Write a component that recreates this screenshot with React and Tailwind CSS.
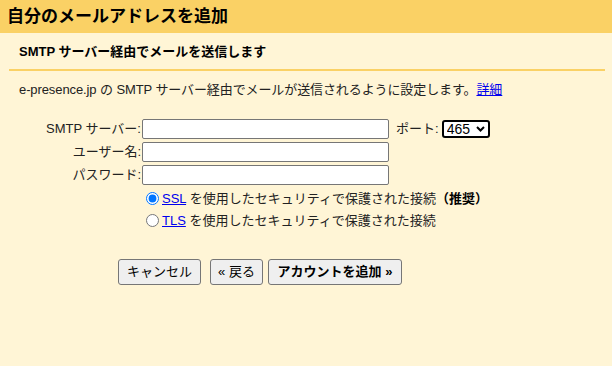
import React, { useState } from 'react';

const font = "font-['Liberation_Sans','Noto_Sans_CJK_JP',sans-serif]";

const Field = ({ label, children }) => (
  <div className="flex items-center h-[20px]">
    <label className="w-[142px] pr-[1px] text-right leading-[20px] text-[#222]">{label}</label>
    {children}
  </div>
);

const TextInput = ({ type = 'text' }) => (
  <input
    type={type}
    className="w-[247px] h-[20px] bg-white border border-[#767676] rounded-[2px] px-[2px] text-[13px] outline-none"
  />
);

const Button = ({ children, w, bold }) => (
  <button
    className={`h-[26px] ${w} bg-[#efefef] border border-[#767676] rounded-[3px] text-[13px] text-black ${bold ? 'font-bold' : ''}`}
  >
    {children}
  </button>
);

const App = () => {
  const [secure, setSecure] = useState('ssl');

  return (
    <div className={`w-[612px] h-[366px] bg-[#fff5d6] text-[13px] text-[#222] ${font}`}>
      <div className="h-[33px] bg-[#fad165] px-[7px] flex items-center">
        <h1 className="text-[17px] font-bold text-black leading-none">自分のメールアドレスを追加</h1>
      </div>

      <div className="pl-[19px] h-[36px] flex items-center">
        <h2 className="font-bold text-black leading-none">SMTP サーバー経由でメールを送信します</h2>
      </div>
      <div className="ml-[9px] mr-[7px] h-[2px] bg-[#fad165]" />

      <p className="pl-[19px] h-[37px] flex items-center leading-none tracking-[-0.1px]">
        e-presence.jp の SMTP サーバー経由でメールが送信されるように設定します。
        <a href="#" className="text-[#0000ee] underline">詳細</a>
      </p>

      <div className="pt-[11px] flex flex-col gap-[3px]">
        <div className="flex items-center">
          <Field label="SMTP サーバー:">
            <TextInput />
          </Field>
          <span className="ml-[7px] text-[#222]">ポート:</span>
          <div className="relative ml-[3px]">
            <select className="appearance-none block h-[18px] w-[48px] py-0 pl-[3px] pr-[14px] border-2 border-black rounded-[3px] bg-white text-[14px] leading-[14px] text-black outline-none">
              <option>465</option>
              <option>587</option>
            </select>
            {/* chevron */}
            <svg className="absolute right-[5px] top-[6px] pointer-events-none" width="9" height="6" viewBox="0 0 9 6">
              <path d="M1 1 L4.5 4.5 L8 1" fill="none" stroke="black" strokeWidth="2" />
            </svg>
          </div>
        </div>
        <Field label="ユーザー名:">
          <TextInput />
        </Field>
        <Field label="パスワード:">
          <TextInput type="password" />
        </Field>
      </div>

      <div className="pl-[146px] pt-[7px] flex flex-col gap-[9px]">
        <label className="flex items-center h-[13px] gap-[3px]">
          <input
            type="radio"
            name="sec"
            checked={secure === 'ssl'}
            onChange={() => setSecure('ssl')}
            className="w-[13px] h-[13px] m-0 accent-[#0075ff]"
          />
          <span className="leading-none">
            <a href="#" className="text-[#0000ee] underline">SSL</a> を使用したセキュリティで保護された接続
            <b className="text-black">（推奨）</b>
          </span>
        </label>
        <label className="flex items-center h-[13px] gap-[3px]">
          <input
            type="radio"
            name="sec"
            checked={secure === 'tls'}
            onChange={() => setSecure('tls')}
            className="w-[13px] h-[13px] m-0 accent-[#0075ff]"
          />
          <span className="leading-none">
            <a href="#" className="text-[#0000ee] underline">TLS</a> を使用したセキュリティで保護された接続
          </span>
        </label>
      </div>

      <div className="pl-[118px] pt-[32px] flex">
        <Button w="w-[83px]">キャンセル</Button>
        <div className="ml-[9px]"><Button w="w-[53px]">« 戻る</Button></div>
        <div className="ml-[5px]"><Button w="w-[134px]" bold>アカウントを追加 »</Button></div>
      </div>
    </div>
  );
};

export default App;
